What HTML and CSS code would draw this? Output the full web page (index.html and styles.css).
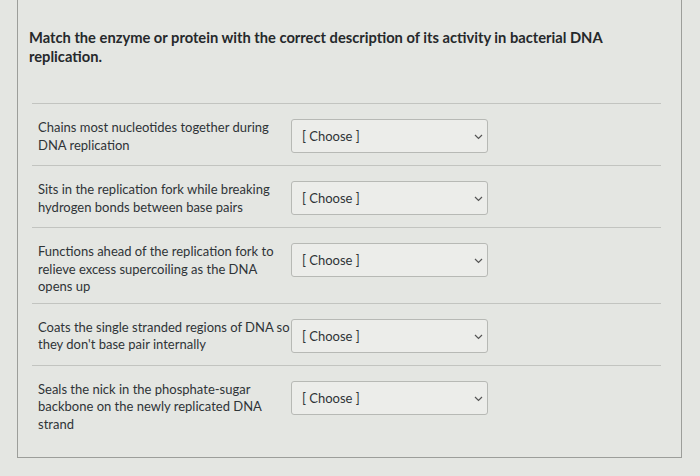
FILE: index.html
```html
<!DOCTYPE html>
<html lang="en">
<head>
    <meta charset="UTF-8">
    <meta name="viewport" content="width=device-width, initial-scale=1.0">
    <title>Matching Question</title>
    <link rel="stylesheet" href="styles.css">
</head>
<body>
    <div class="quiz-card">
        <p class="question-text">Match the enzyme or protein with the correct description of its activity in bacterial DNA replication.</p>

        <div class="answers">
            <div class="answer-row">
                <label class="answer-label" for="match-1">Chains most nucleotides together during DNA replication</label>
                <div class="select-wrap">
                    <select id="match-1"><option>[ Choose ]</option></select>
                    <svg class="chevron" width="9" height="6" viewBox="0 0 9 6"><path d="M1 1l3.5 3.5L8 1" fill="none" stroke="#555" stroke-width="1.2"/></svg>
                </div>
            </div>
            <div class="answer-row">
                <label class="answer-label" for="match-2">Sits in the replication fork while breaking hydrogen bonds between base pairs</label>
                <div class="select-wrap">
                    <select id="match-2"><option>[ Choose ]</option></select>
                    <svg class="chevron" width="9" height="6" viewBox="0 0 9 6"><path d="M1 1l3.5 3.5L8 1" fill="none" stroke="#555" stroke-width="1.2"/></svg>
                </div>
            </div>
            <div class="answer-row">
                <label class="answer-label" for="match-3">Functions ahead of the replication fork to relieve excess supercoiling as the DNA opens up</label>
                <div class="select-wrap">
                    <select id="match-3"><option>[ Choose ]</option></select>
                    <svg class="chevron" width="9" height="6" viewBox="0 0 9 6"><path d="M1 1l3.5 3.5L8 1" fill="none" stroke="#555" stroke-width="1.2"/></svg>
                </div>
            </div>
            <div class="answer-row">
                <label class="answer-label" for="match-4">Coats the single stranded regions of DNA so they don't base pair internally</label>
                <div class="select-wrap">
                    <select id="match-4"><option>[ Choose ]</option></select>
                    <svg class="chevron" width="9" height="6" viewBox="0 0 9 6"><path d="M1 1l3.5 3.5L8 1" fill="none" stroke="#555" stroke-width="1.2"/></svg>
                </div>
            </div>
            <div class="answer-row">
                <label class="answer-label" for="match-5">Seals the nick in the phosphate-sugar backbone on the newly replicated DNA strand</label>
                <div class="select-wrap">
                    <select id="match-5"><option>[ Choose ]</option></select>
                    <svg class="chevron" width="9" height="6" viewBox="0 0 9 6"><path d="M1 1l3.5 3.5L8 1" fill="none" stroke="#555" stroke-width="1.2"/></svg>
                </div>
            </div>
        </div>
    </div>
</body>
</html>
```

FILE: styles.css
```css
body {
    margin: 0;
    padding: 0;
    background-color: #e4e6e2;
    font-family: Lato, "Open Sans", sans-serif;
    color: #2f3437;
    height: 476px;
    overflow: hidden;
}
.quiz-card {
    margin-left: 17px;
    width: 665px;
    height: 458px;
    border: 1px solid #9c9e9a;
    border-top: none;
    box-sizing: border-box;
}
.question-text {
    margin: 0;
    padding: 28px 60px 0 11px;
    font-size: 14.7px;
    font-weight: bold;
    line-height: 19px;
    color: #26292b;
}
.answers {
    margin: 37px 20px 0 14px;
}
.answer-row {
    display: flex;
    align-items: flex-start;
    padding: 15px 0 7px 6px;
    border-top: 1px solid #c2c4c0;
}
.answer-label {
    width: 253px;
    flex: none;
    font-size: 13px;
    line-height: 17.5px;
}
.select-wrap {
    position: relative;
    margin-bottom: 5px;
}
.select-wrap select {
    appearance: none;
    -webkit-appearance: none;
    width: 197px;
    height: 34px;
    padding: 0 10px;
    border: 1px solid #b7b9b5;
    border-radius: 3px;
    background: #ecedea;
    font-family: Lato, "Open Sans", sans-serif;
    font-size: 13px;
    color: #2f3437;
}
.chevron {
    position: absolute;
    right: 5px;
    top: 15px;
    pointer-events: none;
}
```
